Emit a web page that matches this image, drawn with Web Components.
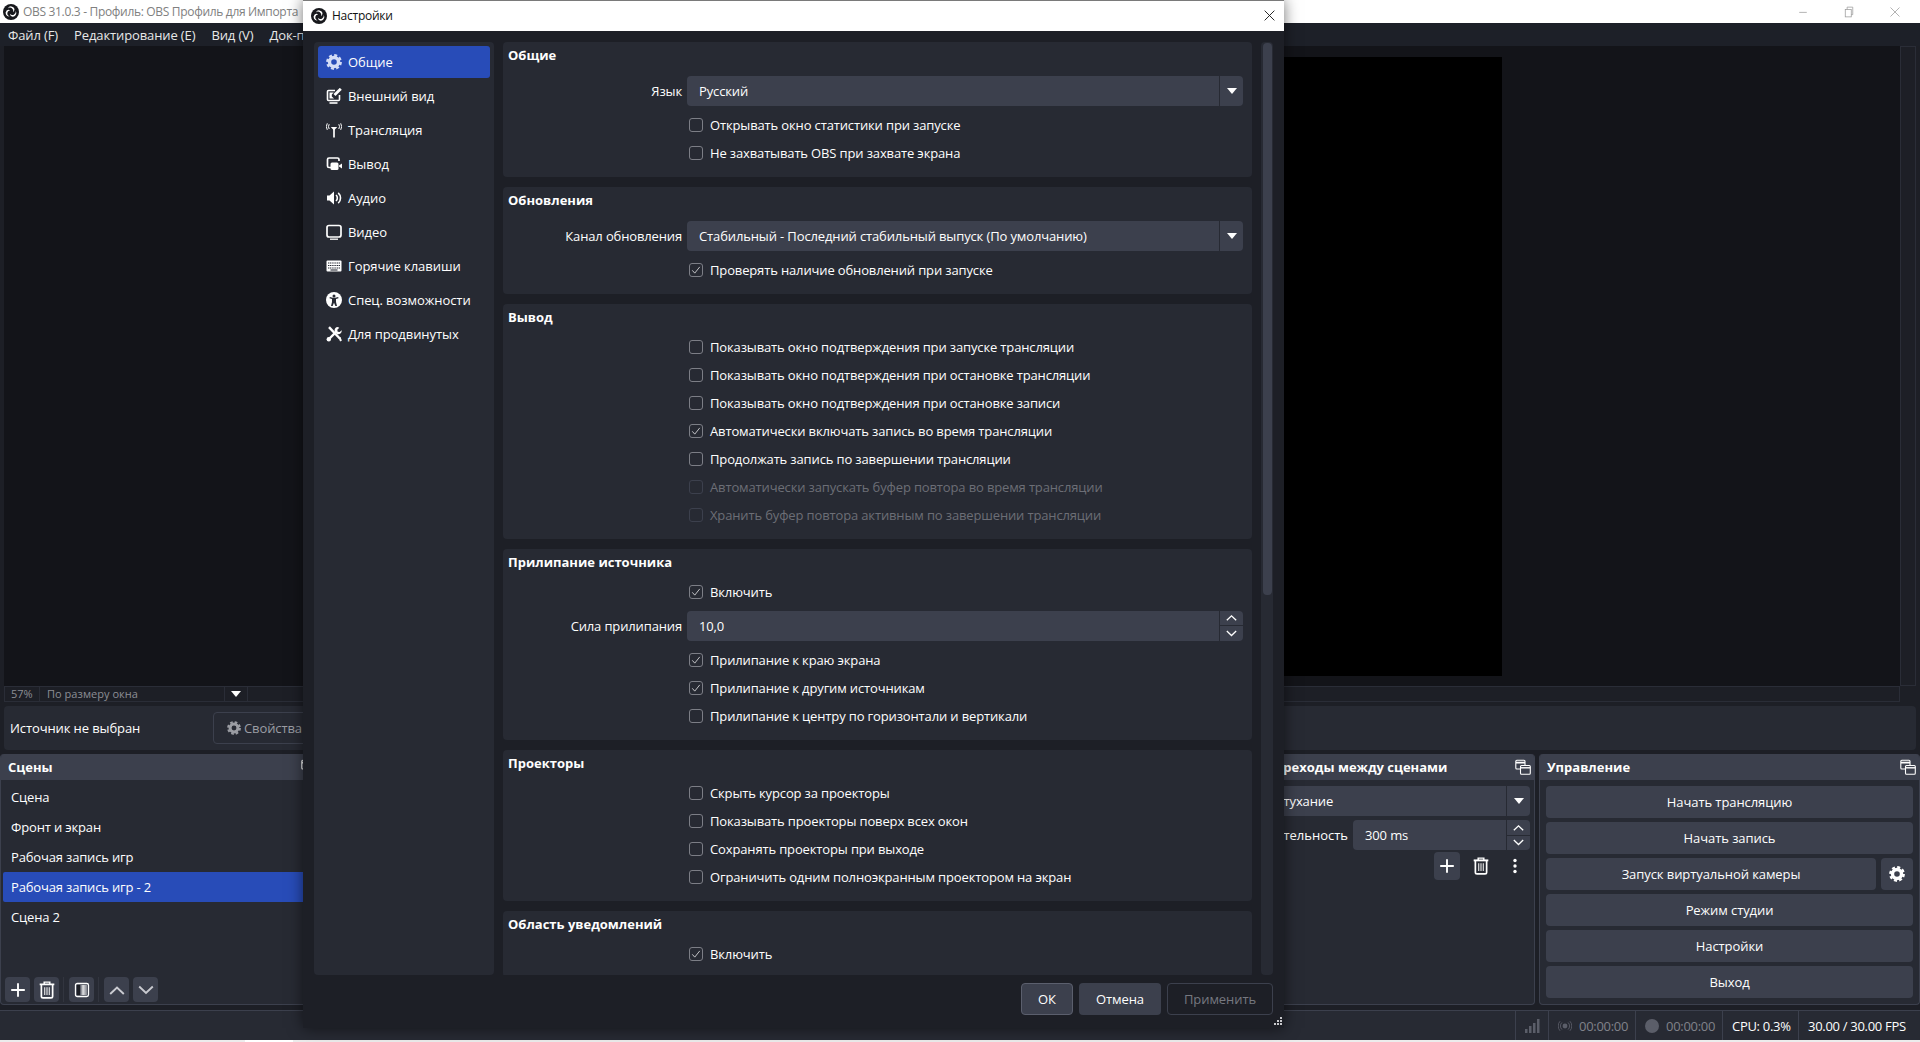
<!DOCTYPE html>
<html lang="ru">
<head>
<meta charset="utf-8">
<title>OBS</title>
<style>
html,body{margin:0;padding:0;background:#1d1f26;overflow:hidden}
body{font:13px "Open Sans","Noto Sans",sans-serif;color:#fefefe}
</style>
</head>
<body>
<obs-app></obs-app>
<script>
const S = (inner, size=16, extra='') => `<svg width="${size}" height="${size}" viewBox="0 0 16 16" fill="none" stroke="currentColor" style="display:block;flex:none" ${extra}>${inner}</svg>`;
const ARM = 'M4.800 4.400A3.600 3.600 0 0 1 11.500 5 3.700 3.700 0 0 1 10 8.200 3.300 3.300 0 0 0 4.800 4.400z';
const ICONS = {
  gear: `<circle cx="8" cy="8" r="4.500" stroke-width="3.400"/><circle cx="8" cy="8" r="6.700" stroke-width="2.400" stroke-dasharray="3 2.263"/>`,
  appearance: `<path d="M9 2.500H2.500a1 1 0 0 0-1 1v8a1 1 0 0 0 1 1h10a1 1 0 0 0 1-1V7" stroke-width="1.600"/><path d="M14.800 .8 8.500 7.100" stroke-width="2.800"/><path d="M3.500 4.500h4.300L5.800 6.500v2L8 10.500H3.500z" fill="currentColor" stroke="none"/><path d="M3.500 15h8" stroke-width="1.600"/>`,
  stream: `<path d="M8 7v8.500" stroke-width="1.700"/><path d="M4.800 5h6.400L8 8.500z" fill="currentColor" stroke="none"/><path d="M3.200 2.200a4.500 4.500 0 0 0 0 4.800M12.800 2.200a4.500 4.500 0 0 1 0 4.800M1.300 1.300a6.500 6.500 0 0 0 0 6.600M14.700 1.300a6.500 6.500 0 0 1 0 6.600" stroke-width="1"/>`,
  output: `<path d="M5 11.500H3a1.500 1.500 0 0 1-1.500-1.500V3.500A1.500 1.500 0 0 1 3 2h8.500A1.500 1.500 0 0 1 13 3.500V5" stroke-width="1.700"/><rect x="4.500" y="6.500" width="8" height="7.500" rx="1.500" fill="currentColor" stroke="none"/><path d="M13 9.500 16 7.500v5l-3-2z" fill="currentColor" stroke="none"/>`,
  audio: `<path d="M1 5.500h2.500L8 1.500v13l-4.500-4H1z" fill="currentColor" stroke="none"/><path d="M10 5a4 4 0 0 1 0 6M12.200 2.800a7 7 0 0 1 0 10.400" stroke-width="1.600"/>`,
  video: `<rect x="1" y="1.500" width="14" height="11.500" rx="2" stroke-width="1.700"/><path d="M4 15.200h8" stroke-width="1.300"/>`,
  keyboard: `<rect x=".5" y="2.500" width="15" height="11" rx="1" fill="currentColor" stroke="none"/><g stroke="#272a33"><path d="M2 5h12M2 7.500h12" stroke-width="1.200" stroke-dasharray="1.200 .6"/><path d="M2 10h12" stroke-width="1.200" stroke-dasharray="1.200 .6"/><path d="M4.500 12h7" stroke-width="1.100"/></g>`,
  access: `<circle cx="8" cy="8" r="8" fill="currentColor" stroke="none"/><circle cx="8" cy="4" r="1.500" fill="#272a33" stroke="none"/><path d="M3.500 6.200 6 7v3l-1 4h1.600L8 10.800 9.400 14H11l-1-4V7l2.500-.8-.3-1.200-3 .8H6.800l-3-.8z" fill="#272a33" stroke="none"/>`,
  tools: `<path d="M3 1.200 13.800 12.500" stroke-width="2.400"/><path d="M13.500 11.500 15 15" stroke-width="2"/><path d="M2.500 13.500 10.500 5.500" stroke-width="2.400"/><path d="M11 1a3.500 3.500 0 0 0-2 5l2 2a3.500 3.500 0 0 0 4.700-3.800l-2 1.900-2-.4-.4-2 2-1.900A3.500 3.500 0 0 0 11 1z" fill="currentColor" stroke="none"/><circle cx="2.800" cy="13.300" r="2.200" fill="currentColor" stroke="none"/>`,
  plus: `<path d="M8 1.200v13.600M1.200 8h13.600" stroke-width="1.900"/>`,
  trash: `<path d="M1.500 3h13" stroke-width="1.700"/><path d="M5.500 2.800V1h5v1.800" stroke-width="1.300"/><path d="M3 3.500v10a1.500 1.500 0 0 0 1.500 1.500h7a1.500 1.500 0 0 0 1.500-1.500v-10" stroke-width="1.500"/><path d="M6 5.500v7M8 5.500v7M10 5.500v7" stroke-width=".9"/>`,
  filter: `<defs><linearGradient id="g" x1="0" x2="1"><stop offset=".3" stop-color="#fefefe" stop-opacity=".05"/><stop offset=".6" stop-color="#fefefe" stop-opacity=".85"/><stop offset="1" stop-color="#fefefe" stop-opacity=".35"/></linearGradient></defs><rect x="1.500" y="1.500" width="13" height="13" rx="1.800" stroke-width="1.300"/><rect x="3" y="3" width="10" height="10" fill="url(#g)" stroke="none"/><rect x="3" y="3" width="3" height="10" fill="#1d1f26" stroke="none"/>`,
  up: `<path d="M1.200 12 8 5.500l6.800 6.500" stroke-width="1.900"/>`,
  down: `<path d="M1.200 4.500 8 11l6.800-6.500" stroke-width="1.900"/>`,
  dots: `<circle cx="8" cy="2.500" r="1.700" fill="currentColor" stroke="none"/><circle cx="8" cy="8" r="1.700" fill="currentColor" stroke="none"/><circle cx="8" cy="13.500" r="1.700" fill="currentColor" stroke="none"/>`,
  float: `<path d="M10 6V2.300a1 1 0 0 0-1-1H1.800a1 1 0 0 0-1 1V9a1 1 0 0 0 1 1H5" stroke-width="1.100"/><path d="M1 3.600h9" stroke-width="1.800"/><rect x="5.500" y="6.500" width="9.800" height="8.700" rx="1" stroke-width="1.100"/><path d="M5.500 8.800h9.800" stroke-width="1.400"/>`,
  bars: `<rect x="1" y="11" width="2.500" height="4" fill="currentColor" stroke="none"/><rect x="5" y="8" width="2.500" height="7" fill="currentColor" stroke="none"/><rect x="9" y="5" width="2.500" height="10" fill="currentColor" stroke="none"/><rect x="13" y="1" width="2.500" height="14" fill="currentColor" stroke="none"/>`,
  streaming: `<circle cx="8" cy="8" r="2.800" fill="currentColor" stroke="none"/><path d="M4.500 4a5.500 5.500 0 0 0 0 8M11.500 4a5.500 5.500 0 0 1 0 8M2.400 2.500a8 8 0 0 0 0 11M13.600 2.500a8 8 0 0 1 0 11" stroke-width="1"/>`,
  logo: `<circle cx="8" cy="8" r="8" fill="#17181c" stroke="none"/><g fill="#fff" stroke="none"><path d="${ARM}"/><path d="${ARM}" transform="rotate(120 8 8)"/><path d="${ARM}" transform="rotate(240 8 8)"/></g>`
};
const icon = (n, size=16) => S(ICONS[n], size);

class Base extends HTMLElement {
  connectedCallback(){
    if(this.shadowRoot) return;
    this.attachShadow({mode:'open'}).innerHTML = `<style>${this.css()}</style>${this.html()}`;
  }
  a(n, d=''){ return this.hasAttribute(n) ? this.getAttribute(n) : d; }
  css(){ return ''; }
  html(){ return '<slot></slot>'; }
}
const def = (n, o) => customElements.define(n, class extends Base {
  css(){ return o.css || ''; }
  html(){ return o.html ? o.html(this) : '<slot></slot>'; }
});

def('obs-titlebar', {
  css: `:host{display:flex;align-items:center;height:23px;background:#fff;color:#808080;font:12px "Open Sans",sans-serif;flex:none}
  .l{margin:0 4px 0 3px}.t{flex:1;letter-spacing:-.32px;white-space:nowrap}
  .w{width:46px;display:flex;justify-content:center;color:#9a9a9a}`,
  html: () => `<span class="l">${icon('logo')}</span><span class="t">OBS 31.0.3 - Профиль: OBS Профиль для Импорта</span>
  <span class="w">${S('<path d="M3 8.500h10" stroke-width="1"/>',12)}</span>
  <span class="w">${S('<rect x="3" y="4.500" width="8" height="10" stroke-width="1"/><path d="M5.500 4.500V1.500H13v10h-2" stroke-width="1"/>',12)}</span>
  <span class="w" style="margin-right:2px">${S('<path d="M2 2 14 14M14 2 2 14" stroke-width="1"/>',12)}</span>`
});
def('obs-menubar', {
  css: `:host{display:flex;align-items:center;height:23px;background:#1d2028;flex:none;padding-left:8px;gap:16px;color:#e8e8e8;letter-spacing:-.12px}`
});
def('obs-preview', {
  css: `:host{display:flex;height:640px;margin:0 4px;flex:none}
  .c{flex:1;background:#131419;display:flex;align-items:center;justify-content:center}
  .b{width:1100px;height:619px;background:#000}
  .s{width:16px;background:#1d1f26;border:1px solid #2a2d37;box-sizing:border-box}`,
  html: () => `<div class="c"><div class="b"></div></div><div class="s"></div>`
});
def('obs-zoombar', {
  css: `:host{display:flex;height:16px;margin:0 20px 0 4px;flex:none;box-sizing:border-box;border:1px solid #2a2d37;background:#1d1f26;color:#8c8e95;font-size:11px;line-height:14px}
  div{box-sizing:border-box;border-right:1px solid #2a2d37;height:100%}
  .p{width:35px;padding-left:6px}.z{width:185px;padding-left:7px;letter-spacing:.04px}
  .a{width:23px;display:flex;align-items:center;justify-content:center}
  i{display:block;border:5px solid transparent;border-top:6px solid #fefefe;border-bottom:0;width:0;height:0}`,
  html: () => `<div class="p">57%</div><div class="z">По размеру окна</div><div class="a"><i></i></div>`
});
def('obs-context', {
  css: `:host{display:flex;align-items:center;height:44px;margin:4px;background:#272a33;border-radius:4px;flex:none;padding-left:6px;box-sizing:border-box;letter-spacing:-.1px}
  .t{width:203px}
  .b{display:flex;align-items:center;gap:3px;height:32px;box-sizing:border-box;border:1px solid #3c404d;border-radius:4px;padding:0 10px 0 13px;color:#9b9da3}`,
  html: () => `<span class="t">Источник не выбран</span><span class="b">${icon('gear',14)}<span>Свойства</span></span>`
});
def('obs-dock', {
  css: `:host{display:flex;flex-direction:column;height:251px;flex:none;box-sizing:border-box;background:#272a33;border:1px solid #3c404d;border-top:0;border-radius:4px;overflow:hidden}
  .h{height:26px;flex:none;background:#3c404d;display:flex;align-items:center;padding:0 3px 0 7px;font-weight:700;justify-content:space-between;white-space:nowrap}
  .b{flex:1;min-height:0;display:flex;flex-direction:column}`,
  html: e => `<div class="h"><span>${e.a('title')}</span>${icon('float')}</div><div class="b"><slot></slot></div>`
});
def('obs-scene-item', {
  css: `:host{display:flex;align-items:center;height:30px;padding-left:8px;border-radius:2px;flex:none;white-space:nowrap;letter-spacing:-.16px}
  :host([selected]){background:#284cb8}`
});
def('obs-tool', {
  css: `:host{display:flex;align-items:center;justify-content:center;flex:none;width:25px;height:25px;border-radius:4px}
  :host([filled]){background:#3c404d}
  :host([dim]){color:#c9cad0}`,
  html: e => icon(e.a('icon'), +e.a('size','16'))
});
def('obs-sep', { css: `:host{display:block;width:1px;height:25px;background:#32353f;flex:none}`, html: () => '' });
def('obs-button', {
  css: `:host{display:flex;align-items:center;justify-content:center;height:32px;background:#3c404d;border-radius:4px;box-sizing:border-box;flex:none;white-space:nowrap;letter-spacing:-.08px}
  :host([outline]){background:transparent;border:1px solid #3c404d;color:#767880}
  :host([default]){border:1px solid #5b5f6d}`
});
def('obs-select', {
  css: `:host{display:flex;align-items:center;height:30px;background:#3c404d;border-radius:4px;box-sizing:border-box;padding-left:12px;letter-spacing:-.13px}
  .t{flex:1;white-space:nowrap;overflow:hidden}
  .a{width:24px;height:100%;border-left:1px solid #272a33;display:flex;align-items:center;justify-content:center;box-sizing:border-box;flex:none}
  i{display:block;border:5px solid transparent;border-top:6px solid #fefefe;border-bottom:0;width:0;height:0}`,
  html: e => `<span class="t"><slot></slot></span><span class="a"><i></i></span>`
});
def('obs-spin', {
  css: `:host{display:flex;align-items:center;height:30px;background:#3c404d;border-radius:4px;box-sizing:border-box;padding-left:12px;letter-spacing:-.13px}
  .t{flex:1}
  .a{width:24px;height:100%;border-left:1px solid #272a33;display:flex;flex-direction:column;box-sizing:border-box;flex:none}
  .a span{flex:1;display:flex;align-items:center;justify-content:center}
  .a span+span{border-top:1px solid #272a33}`,
  html: () => `<span class="t"><slot></slot></span><span class="a"><span>${icon('up',11)}</span><span>${icon('down',11)}</span></span>`
});
def('obs-status', {
  css: `:host{display:flex;justify-content:flex-end;align-items:center;height:30px;flex:none;margin-top:5px;background:#272a33;border-top:1px solid #3c404d;box-sizing:border-box}
  .s{display:flex;align-items:center;height:100%;box-sizing:border-box;border-left:1px solid #3c404d;color:#fefefe;letter-spacing:-.3px;white-space:nowrap}
  .d{color:#80828a}
  .i{color:#5b5e69}
  .dot{width:14px;height:14px;border-radius:50%;background:#5b5e69}`,
  html: () => `<div class="s i" style="width:33px;justify-content:center">${icon('bars',16)}</div>
  <div class="s d" style="width:87px;padding-left:9px;gap:7px"><span class="i">${icon('streaming',14)}</span>00:00:00</div>
  <div class="s d" style="width:87px;padding-left:9px;gap:7px"><span class="dot"></span>00:00:00</div>
  <div class="s" style="width:76px;padding-left:9px">CPU: 0.3%</div>
  <div class="s" style="width:122px;padding-left:9px">30.00 / 30.00 FPS</div>`
});
def('obs-strip', {
  css: `:host{display:flex;height:2px;background:#ececec;flex:none}i{display:block;margin-left:245px;width:48px;background:#fff}`,
  html: () => `<i></i>`
});

def('obs-nav-item', {
  css: `:host{display:flex;align-items:center;height:32px;flex:none;border-radius:3px;padding-left:8px;gap:6px;white-space:nowrap;letter-spacing:-.06px}
  :host([selected]){background:#284cb8}
  :host([selected]) span{color:#d3dcf6}`,
  html: e => `<span>${icon(e.a('icon'))}</span><slot></slot>`
});
def('obs-panel', {
  css: `:host{display:block;background:#272a33;border-radius:4px;flex:none;box-sizing:border-box;padding-bottom:var(--pb,9px)}
  .h{height:26px;line-height:27px;padding-left:5px;font-weight:700}
  .b{padding-top:var(--pt,3px)}`,
  html: e => `<div class="h">${e.a('title')}</div><div class="b"><slot></slot></div>`
});
def('obs-row', {
  css: `:host{display:flex;align-items:center;height:39px;padding:0 9px 1px 0;box-sizing:border-box}
  .l{width:179px;text-align:right;margin-right:5px;flex:none;white-space:nowrap;letter-spacing:-.14px}
  ::slotted(*){flex:1;min-width:0}`,
  html: e => `<span class="l">${e.a('label')}</span><slot></slot>`
});
def('obs-check', {
  css: `:host{display:flex;align-items:center;height:28px;padding-left:186px;gap:7px;white-space:nowrap;letter-spacing:-.14px}
  .b{width:14px;height:14px;border:1px solid #7c7e86;border-radius:3px;box-sizing:border-box;flex:none;display:flex;align-items:center;justify-content:center}
  :host([disabled]){color:#6c6e76}
  :host([disabled]) .b{border-color:#3c404d}`,
  html: e => `<span class="b">${e.hasAttribute('checked') ? S('<path d="M2 8.500 6 13 14 3" stroke-width="1.400"/>',10,'color="#d8d8da"') : ''}</span><slot></slot>`
});
def('obs-settings', {
  css: `:host{position:absolute;left:303px;top:0;width:981px;height:1028px;background:#1d1f26;box-shadow:0 0 14px rgba(0,0,0,.55);display:flex;flex-direction:column}
  .tb{height:31px;flex:none;background:#fff;border-top:1px solid #7a7a7a;box-sizing:border-box;color:#111;display:flex;align-items:center;font:12px "Open Sans",sans-serif;padding:0 0 1px 8px;gap:5px;letter-spacing:-.25px}
  .tb .t{flex:1}.tb .x{margin-right:8px;color:#111}
  .main{display:flex;height:933px;margin:11px 11px 0 11px;flex:none}
  nav{width:180px;flex:none;background:#272a33;border-radius:4px;padding:4px;box-sizing:border-box;display:flex;flex-direction:column;gap:2px}
  .col{width:749px;flex:none;margin-left:9px;display:flex;flex-direction:column;gap:10px;overflow:hidden}
  .sb{width:12px;flex:none;margin-left:9px;background:#272a33;border-radius:4px;padding:1px 1.500px;box-sizing:border-box}
  .sb i{display:block;width:9px;height:552px;background:#3c404d;border-radius:4px}
  .foot{display:flex;justify-content:flex-end;gap:6px;margin:8px 11px 0 0}
  .grip{position:absolute;right:1px;bottom:2px}`,
  html: () => `<div class="tb">${icon('logo')}<span class="t">Настройки</span><span class="x">${S('<path d="M2 2 14 14M14 2 2 14" stroke-width="1.100"/>',13)}</span></div>
  <div class="main">
    <nav><slot name="nav"></slot></nav>
    <div class="col"><slot></slot></div>
    <div class="sb"><i></i></div>
  </div>
  <div class="foot">
    <obs-button default style="width:52px">ОК</obs-button>
    <obs-button style="width:82px">Отмена</obs-button>
    <obs-button outline style="width:106px">Применить</obs-button>
  </div>
  <svg class="grip" width="10" height="10" viewBox="0 0 10 10" fill="#c8c8cc"><rect x="7" y="1" width="2" height="2"/><rect x="4" y="4" width="2" height="2"/><rect x="7" y="4" width="2" height="2"/><rect x="1" y="7" width="2" height="2"/><rect x="4" y="7" width="2" height="2"/><rect x="7" y="7" width="2" height="2"/></svg>`
});

def('obs-app', {
  css: `:host{display:flex;flex-direction:column;position:relative;width:1920px;height:1042px;overflow:hidden;background:#1d1f26}
  .docks{display:flex;flex:none;height:251px}
  .fill{flex:1}
  .list{padding:2px 0 0 2px;flex:1;overflow:hidden}
  .tools{display:flex;align-items:center;padding:0 0 1px 4px;gap:4px;height:27px;flex:none}
  .ctl{padding:6px 6px 0 6px;display:flex;flex-direction:column;gap:4px}
  .vc{display:flex;gap:5px}
  .tr{padding:6px 4px 0 4px;display:flex;flex-direction:column;gap:4px}
  .dur{display:flex;align-items:center;justify-content:flex-end;gap:5px;white-space:nowrap}
  .acts{display:flex;justify-content:flex-end;gap:8px;margin:-2px 2px 0 0}
  .acts obs-tool{width:26px;height:28px}`,
  html: () => `
  <obs-titlebar></obs-titlebar>
  <obs-menubar><span>Файл (F)</span><span>Редактирование (E)</span><span>Вид (V)</span><span>Док-панели (D)</span></obs-menubar>
  <obs-preview></obs-preview>
  <obs-zoombar></obs-zoombar>
  <obs-context></obs-context>
  <div class="docks">
    <obs-dock title="Сцены" style="width:321px">
      <div class="list">
        <obs-scene-item>Сцена</obs-scene-item>
        <obs-scene-item>Фронт и экран</obs-scene-item>
        <obs-scene-item>Рабочая запись игр</obs-scene-item>
        <obs-scene-item selected>Рабочая запись игр - 2</obs-scene-item>
        <obs-scene-item>Сцена 2</obs-scene-item>
      </div>
      <div class="tools">
        <obs-tool filled icon="plus"></obs-tool>
        <obs-tool filled icon="trash" size="18"></obs-tool>
        <obs-sep style="margin-right:1px"></obs-sep>
        <obs-tool filled icon="filter"></obs-tool>
        <obs-sep style="margin-right:1px"></obs-sep>
        <obs-tool filled dim icon="up"></obs-tool>
        <obs-tool filled dim icon="down"></obs-tool>
      </div>
    </obs-dock>
    <div class="fill"></div>
    <obs-dock title="Переходы между сценами" style="width:277px">
      <div class="tr">
        <obs-select style="padding-left:6px">Затухание</obs-select>
        <div class="dur"><span>Длительность</span><obs-spin style="width:177px;flex:none">300 ms</obs-spin></div>
        <div class="acts">
          <obs-tool filled icon="plus"></obs-tool>
          <obs-tool icon="trash" size="18"></obs-tool>
          <obs-tool icon="dots"></obs-tool>
        </div>
      </div>
    </obs-dock>
    <obs-dock title="Управление" style="width:381px;margin-left:4px">
      <div class="ctl">
        <obs-button>Начать трансляцию</obs-button>
        <obs-button>Начать запись</obs-button>
        <div class="vc"><obs-button style="flex:1">Запуск виртуальной камеры</obs-button><obs-button style="width:32px">${icon('gear',16)}</obs-button></div>
        <obs-button>Режим студии</obs-button>
        <obs-button>Настройки</obs-button>
        <obs-button>Выход</obs-button>
      </div>
    </obs-dock>
  </div>
  <obs-status></obs-status>
  <obs-strip></obs-strip>
  <obs-settings>
    <obs-nav-item slot="nav" icon="gear" selected>Общие</obs-nav-item>
    <obs-nav-item slot="nav" icon="appearance">Внешний вид</obs-nav-item>
    <obs-nav-item slot="nav" icon="stream">Трансляция</obs-nav-item>
    <obs-nav-item slot="nav" icon="output">Вывод</obs-nav-item>
    <obs-nav-item slot="nav" icon="audio">Аудио</obs-nav-item>
    <obs-nav-item slot="nav" icon="video">Видео</obs-nav-item>
    <obs-nav-item slot="nav" icon="keyboard">Горячие клавиши</obs-nav-item>
    <obs-nav-item slot="nav" icon="access">Спец. возможности</obs-nav-item>
    <obs-nav-item slot="nav" icon="tools">Для продвинутых</obs-nav-item>

    <obs-panel title="Общие" style="--pt:4px;--pb:10px">
      <obs-row label="Язык"><obs-select>Русский</obs-select></obs-row>
      <obs-check>Открывать окно статистики при запуске</obs-check>
      <obs-check>Не захватывать OBS при захвате экрана</obs-check>
    </obs-panel>
    <obs-panel title="Обновления" style="--pt:4px;--pb:10px">
      <obs-row label="Канал обновления"><obs-select>Стабильный - Последний стабильный выпуск (По умолчанию)</obs-select></obs-row>
      <obs-check checked>Проверять наличие обновлений при запуске</obs-check>
    </obs-panel>
    <obs-panel title="Вывод" style="--pt:3px;--pb:10px">
      <obs-check>Показывать окно подтверждения при запуске трансляции</obs-check>
      <obs-check>Показывать окно подтверждения при остановке трансляции</obs-check>
      <obs-check>Показывать окно подтверждения при остановке записи</obs-check>
      <obs-check checked>Автоматически включать запись во время трансляции</obs-check>
      <obs-check>Продолжать запись по завершении трансляции</obs-check>
      <obs-check disabled>Автоматически запускать буфер повтора во время трансляции</obs-check>
      <obs-check disabled>Хранить буфер повтора активным по завершении трансляции</obs-check>
    </obs-panel>
    <obs-panel title="Прилипание источника" style="--pt:3px;--pb:10px">
      <obs-check checked>Включить</obs-check>
      <obs-row label="Сила прилипания" style="height:40px"><obs-spin>10,0</obs-spin></obs-row>
      <obs-check checked>Прилипание к краю экрана</obs-check>
      <obs-check checked>Прилипание к другим источникам</obs-check>
      <obs-check>Прилипание к центру по горизонтали и вертикали</obs-check>
    </obs-panel>
    <obs-panel title="Проекторы" style="--pt:3px;--pb:10px">
      <obs-check>Скрыть курсор за проекторы</obs-check>
      <obs-check>Показывать проекторы поверх всех окон</obs-check>
      <obs-check>Сохранять проекторы при выходе</obs-check>
      <obs-check>Ограничить одним полноэкранным проектором на экран</obs-check>
    </obs-panel>
    <obs-panel title="Область уведомлений" style="--pt:3px">
      <obs-check checked>Включить</obs-check>
    </obs-panel>
  </obs-settings>`
});
</script>
</body>
</html>
